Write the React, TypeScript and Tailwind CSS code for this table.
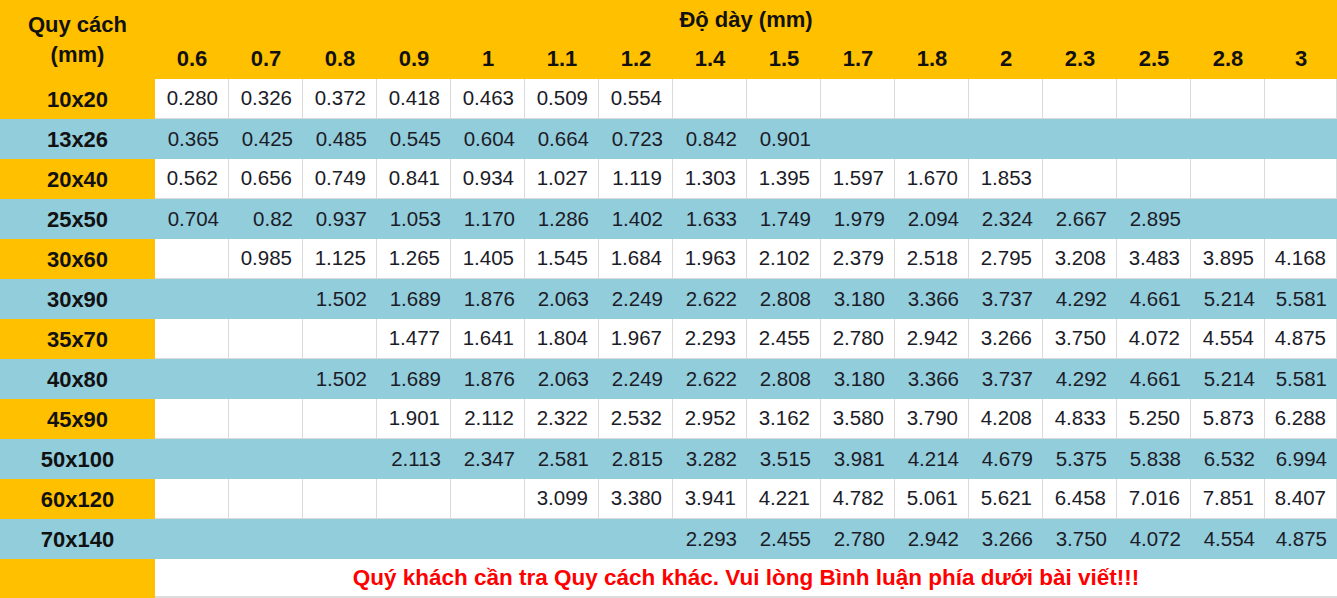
const sizes = ["0.6", "0.7", "0.8", "0.9", "1", "1.1", "1.2", "1.4", "1.5", "1.7", "1.8", "2", "2.3", "2.5", "2.8", "3"]

const rows: { name: string; values: string[] }[] = [
  { name: "10x20", values: ["0.280", "0.326", "0.372", "0.418", "0.463", "0.509", "0.554"] },
  { name: "13x26", values: ["0.365", "0.425", "0.485", "0.545", "0.604", "0.664", "0.723", "0.842", "0.901"] },
  { name: "20x40", values: ["0.562", "0.656", "0.749", "0.841", "0.934", "1.027", "1.119", "1.303", "1.395", "1.597", "1.670", "1.853"] },
  { name: "25x50", values: ["0.704", "0.82", "0.937", "1.053", "1.170", "1.286", "1.402", "1.633", "1.749", "1.979", "2.094", "2.324", "2.667", "2.895"] },
  { name: "30x60", values: ["", "0.985", "1.125", "1.265", "1.405", "1.545", "1.684", "1.963", "2.102", "2.379", "2.518", "2.795", "3.208", "3.483", "3.895", "4.168"] },
  { name: "30x90", values: ["", "", "1.502", "1.689", "1.876", "2.063", "2.249", "2.622", "2.808", "3.180", "3.366", "3.737", "4.292", "4.661", "5.214", "5.581"] },
  { name: "35x70", values: ["", "", "", "1.477", "1.641", "1.804", "1.967", "2.293", "2.455", "2.780", "2.942", "3.266", "3.750", "4.072", "4.554", "4.875"] },
  { name: "40x80", values: ["", "", "1.502", "1.689", "1.876", "2.063", "2.249", "2.622", "2.808", "3.180", "3.366", "3.737", "4.292", "4.661", "5.214", "5.581"] },
  { name: "45x90", values: ["", "", "", "1.901", "2.112", "2.322", "2.532", "2.952", "3.162", "3.580", "3.790", "4.208", "4.833", "5.250", "5.873", "6.288"] },
  { name: "50x100", values: ["", "", "", "2.113", "2.347", "2.581", "2.815", "3.282", "3.515", "3.981", "4.214", "4.679", "5.375", "5.838", "6.532", "6.994"] },
  { name: "60x120", values: ["", "", "", "", "", "3.099", "3.380", "3.941", "4.221", "4.782", "5.061", "5.621", "6.458", "7.016", "7.851", "8.407"] },
  { name: "70x140", values: ["", "", "", "", "", "", "", "2.293", "2.455", "2.780", "2.942", "3.266", "3.750", "4.072", "4.554", "4.875"] },
]

const cols = "grid grid-cols-[155px_repeat(15,74px)_1fr]"

export default function App() {
  return (
    <div className="w-[1337px] h-[598px] bg-white font-['Liberation_Sans',Arial,sans-serif] overflow-hidden">
      {/* Header */}
      <div className="flex h-[79px] bg-[#ffc000] text-[#111]">
        <div className="w-[155px] flex flex-col items-center justify-center text-[22px] font-bold leading-[30px]">
          <span>Quy cách</span>
          <span>(mm)</span>
        </div>
        <div className="flex-1 flex flex-col">
          <div className="h-[38px] flex items-center justify-center text-[22px] font-bold">Độ dày (mm)</div>
          <div className="h-[41px] grid grid-cols-[repeat(15,74px)_1fr]">
            {sizes.map((s) => (
              <div key={s} className="flex items-center justify-center text-[22px] font-bold">
                {s}
              </div>
            ))}
          </div>
        </div>
      </div>

      {/* Body */}
      {rows.map((row, i) => {
        const blue = i % 2 === 1
        return (
          <div key={row.name} className={`${cols} h-[40px] ${blue ? "bg-[#92cddc]" : "bg-white"}`}>
            <div
              className={`flex items-center justify-center text-[22px] font-bold text-[#111] ${
                blue ? "" : "bg-[#ffc000]"
              }`}
            >
              {row.name}
            </div>
            {sizes.map((s, j) => (
              <div
                key={s}
                className={`flex items-center justify-end pr-[10px] text-[20.5px] text-[#1c1c28] ${
                  blue ? "" : "border-r border-b border-[#dadada]"
                }`}
              >
                {row.values[j] ?? ""}
              </div>
            ))}
          </div>
        )
      })}

      {/* Footer */}
      <div className="flex h-[39px]">
        <div className="w-[155px] bg-[#ffc000]" />
        <div className="flex-1 flex items-center justify-center border-b-2 border-[#dcdcdc] text-[22.5px] font-bold text-[#ff0000]">
          Quý khách cần tra Quy cách khác. Vui lòng Bình luận phía dưới bài viết!!!
        </div>
      </div>
    </div>
  )
}
